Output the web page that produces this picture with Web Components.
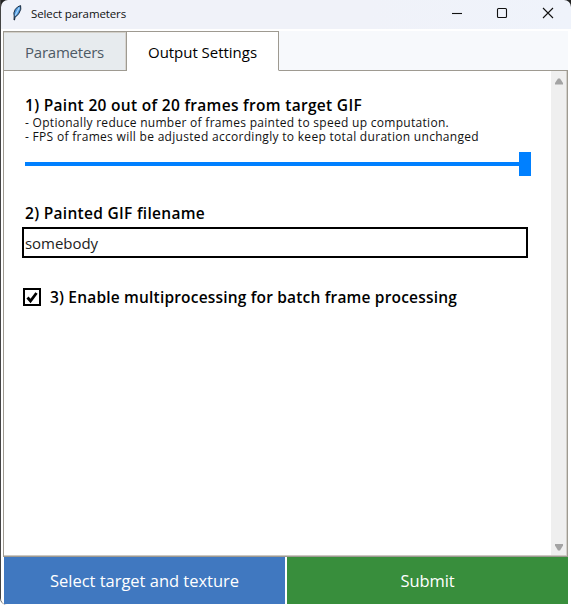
<!DOCTYPE html>
<html lang="en"><head><meta charset="utf-8"><title>Select parameters</title>
<style>body{margin:0;background:#fff;overflow:hidden}</style></head><body>
<param-window></param-window>
<script>
const define=(name,html,init)=>customElements.define(name,class extends HTMLElement{
  constructor(){super();this.attachShadow({mode:'open'}).innerHTML=html;}
  connectedCallback(){if(init)init.call(this);}
});
// Text line whose letter spacing is adjusted to fill its "w" width.
define('fit-text',`<style>:host{display:block;white-space:nowrap}span{display:inline-block}</style><span><slot></slot></span>`,function(){
  const s=this.shadowRoot.querySelector('span'),w=+this.getAttribute('w');
  this.style.width=w+'px';
  const n=this.textContent.length;
  s.style.letterSpacing=(w-s.getBoundingClientRect().width)/n+'px';
});
define('title-bar',`<style>
:host{display:flex;height:29px;background:linear-gradient(90deg,#f0f2f9 0 65%,#eff3fb);align-items:center;font-size:11.5px;color:#111;border-radius:7px 7px 0 0;box-sizing:border-box;padding-left:8px}
svg{display:block}.q{margin:-3px 7px 0 1px}fit-text{line-height:16px;margin-top:-1px}.b{margin-left:auto;margin:-3px 1px 0 auto}
</style><svg class="q" width="14" height="18" viewBox="0 0 14 18"><path d="M4 16 4.2 12Q3 9 5.3 5.3 7.5 2.2 10.6 1.6 11.8 5 9 9.2 7.4 12 5.2 12.8L4.5 16Z" fill="#4f98dc" stroke="#101c2b" stroke-width=".9"/><path d="M5.2 11.5 9.3 3.5" stroke="#a8d5fb" stroke-width="1.3"/></svg>
<fit-text w="95">Select parameters</fit-text>
<svg class="b" width="120" height="14" viewBox="0 0 120 14" fill="none" stroke="#111" stroke-width="1.1"><path d="M2 7.5H12"/><rect x="47.5" y="2.5" width="9" height="9" rx="1"/><path d="M93 2 103 12M103 2 93 12"/></svg>`);
define('tab-item',`<style>
:host{display:flex;box-sizing:border-box;height:40px;border:1px solid #9e9a91;background:#e7ebee;color:#4e5a65;padding:2px 0 0 21px;align-items:center;font-size:15px;width:124px;box-shadow:inset 0 1px #d3d0c9,inset -1px 0 #d8d5d0}
:host([active]){background:#fff;color:#000;border-left:0;width:152px;border-bottom-color:#fff;box-shadow:none}
</style><slot></slot>`);
define('tab-strip',`<style>:host{display:flex;height:40px;background:#f7f9fc;box-shadow:inset 0 -1px #9e9a91}</style>
<tab-item><fit-text w="79">Parameters</fit-text></tab-item><tab-item active><fit-text w="109">Output Settings</fit-text></tab-item>`);
define('scroll-bar',`<style>:host{display:flex;flex-direction:column;justify-content:space-between;align-items:center;width:16px;background:#efefef;box-sizing:border-box;padding:7px 0 4px}svg{display:block}</style>
<svg width="8" height="7"><path d="M3 .5H5L8 5V6.5H0V5Z" fill="#a3a3a3"/></svg><svg width="8" height="7"><path d="M0 0H8V1.5L5 6.5H3L0 1.5Z" fill="#a3a3a3"/></svg>`);
define('range-slider',`<style>:host{display:flex;width:506px;height:24px;align-items:center}i{flex:1;height:4px;background:#0080ff}b{width:12px;height:24px;background:#0080ff}</style><i></i><b></b>`);
define('text-field',`<style>:host{display:block;box-sizing:border-box;width:506px;height:31px;border:2px solid #000;padding-left:1px;font-size:15px;line-height:28px;color:#222}</style><slot></slot>`);
define('check-box',`<style>:host{display:flex;align-items:center;gap:9px}svg{display:block}</style>
<svg width="18" height="18"><rect x="1" y="1" width="16" height="16" fill="#fff" stroke="#000" stroke-width="2"/><path d="M4.5 9.5 7.5 13 13.5 5" fill="none" stroke="#000" stroke-width="2.8"/></svg><slot></slot>`);
define('settings-panel',`<style>
:host{display:flex;height:486px;box-sizing:border-box;border:1px solid #9e9a91;border-top:0;background:#fff;box-shadow:inset 0 -1px #cbc8c2}
main{flex:1;padding:23px 0 0 21px}scroll-bar{border-right:1px solid #d3d0ca;margin-bottom:1px}
.h{font-size:15.5px;font-weight:600;line-height:22px}.s{font-size:12px;font-stretch:96%;line-height:14px;color:#111}
range-slider{margin-top:8px}.t{margin-top:26px}text-field{margin:3px 0 0 -3px}check-box{margin:28px 0 0 -2px}
</style><main><fit-text class="h" w="337">1) Paint 20 out of 20 frames from target GIF</fit-text>
<fit-text class="s" w="424">- Optionally reduce number of frames painted to speed up computation.</fit-text>
<fit-text class="s" w="454">- FPS of frames will be adjusted accordingly to keep total duration unchanged</fit-text>
<range-slider></range-slider><fit-text class="h t" w="180">2) Painted GIF filename</fit-text>
<text-field><fit-text w="73">somebody</fit-text></text-field>
<check-box><fit-text class="h" w="407">3) Enable multiprocessing for batch frame processing</fit-text></check-box></main><scroll-bar></scroll-bar>`);
define('action-button',`<style>:host{display:flex;flex:1;height:47px;justify-content:center;align-items:center;color:#fff;font-size:16.5px;background:var(--fill)}</style><slot></slot>`);
define('param-window',`<style>
:host{display:flex;flex-direction:column;width:571px;height:605px;box-sizing:border-box;font-family:"Open Sans","Noto Sans",sans-serif;background:linear-gradient(#222,#222) 0 0/571px 8px no-repeat,#fff;border-left:1px solid #444;border-radius:0 0 6px 7px}
.body{background:#fff;padding:2px 3px 0 2px;flex:1;border-radius:0 0 7px 7px}footer{display:flex;gap:2px;padding:0 0 0 1px}
</style><title-bar></title-bar><div class="body"><tab-strip></tab-strip><settings-panel></settings-panel>
<footer><action-button style="--fill:#4078c0"><fit-text w="189">Select target and texture</fit-text></action-button><action-button style="--fill:#388e3c"><fit-text w="54">Submit</fit-text></action-button></footer></div>`);
</script></body></html>
